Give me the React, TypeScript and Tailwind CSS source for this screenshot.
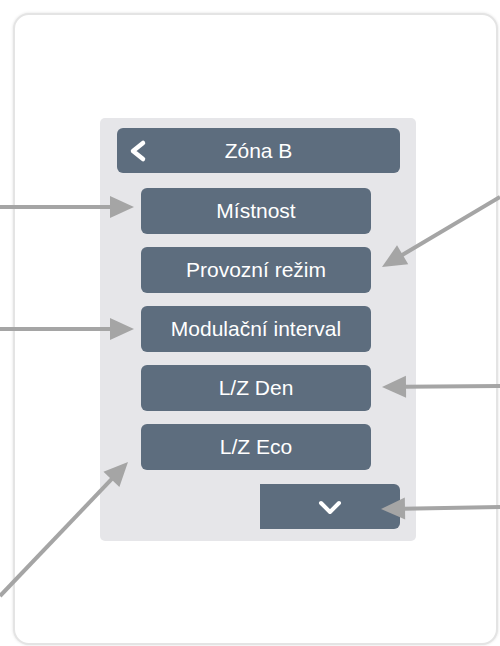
import React from 'react';

const items = ['Místnost', 'Provozní režim', 'Modulační interval', 'L/Z Den', 'L/Z Eco'];

// callout arrows: tail -> tip, drawn over the page
const arrows = [
    { x1: 0, y1: 207, x2: 134, y2: 207 },
    { x1: 0, y1: 329, x2: 134, y2: 329 },
    { x1: 0, y1: 596, x2: 128, y2: 462 },
    { x1: 500, y1: 197, x2: 382, y2: 267 },
    { x1: 500, y1: 386, x2: 382, y2: 387 },
    { x1: 500, y1: 507, x2: 381, y2: 509 },
];

function Arrow({ x1, y1, x2, y2 }: { x1: number; y1: number; x2: number; y2: number }) {
    const len = Math.hypot(x2 - x1, y2 - y1);
    const ux = (x2 - x1) / len;
    const uy = (y2 - y1) / len;
    const head = 24;
    const half = 11;
    const bx = x2 - ux * head;
    const by = y2 - uy * head;
    const pts = `${x2},${y2} ${bx - uy * half},${by + ux * half} ${bx + uy * half},${by - ux * half}`;
    return (
        <g>
            <line x1={x1} y1={y1} x2={bx + ux * 2} y2={by + uy * 2} stroke="#a5a5a5" strokeWidth={4} />
            <polygon points={pts} fill="#a5a5a5" />
        </g>
    );
}

export default function App() {
    return (
        <div className="relative w-[500px] h-[646px] bg-white overflow-hidden pt-[13px] pl-[13px] font-['Liberation_Sans',Arial,sans-serif]">
            <div className="w-[485px] h-[632px] rounded-[16px] border-2 border-[#e4e4e4] shadow-[0_0_3px_rgba(0,0,0,0.12)] bg-white pt-[103px] pl-[85px]">
                <div className="w-[316px] h-[423px] rounded-[5px] bg-[#e6e6e9] pt-[10px] flex flex-col">
                    <div className="ml-[17px] w-[283px] h-[45px] rounded-[6px] bg-[#5d6d7e] relative flex items-center justify-center text-white text-[21px]">
                        <svg className="absolute left-[10px] top-[11px]" width="22" height="24" viewBox="0 0 22 24">
                            <polyline points="16,4 6,12 16,20" fill="none" stroke="white" strokeWidth="4.5" strokeLinecap="round" strokeLinejoin="round" />
                        </svg>
                        Zóna B
                    </div>
                    <div className="ml-[41px] mt-[15px] flex flex-col gap-[13px]">
                        {items.map((name) => (
                            <div key={name} className="w-[230px] h-[46px] rounded-[6px] bg-[#5d6d7e] flex items-center justify-center text-white text-[21px]">
                                {name}
                            </div>
                        ))}
                    </div>
                    <div className="ml-[160px] mt-[14px] w-[140px] h-[45px] rounded-r-[6px] bg-[#5d6d7e] flex items-center justify-center">
                        <svg width="26" height="18" viewBox="0 0 26 18">
                            <polyline points="4,5 13,14 22,5" fill="none" stroke="white" strokeWidth="4" strokeLinecap="round" strokeLinejoin="round" />
                        </svg>
                    </div>
                </div>
            </div>
            <svg className="absolute inset-0 pointer-events-none" width="500" height="646">
                {arrows.map((a, i) => (
                    <Arrow key={i} {...a} />
                ))}
            </svg>
        </div>
    );
}
